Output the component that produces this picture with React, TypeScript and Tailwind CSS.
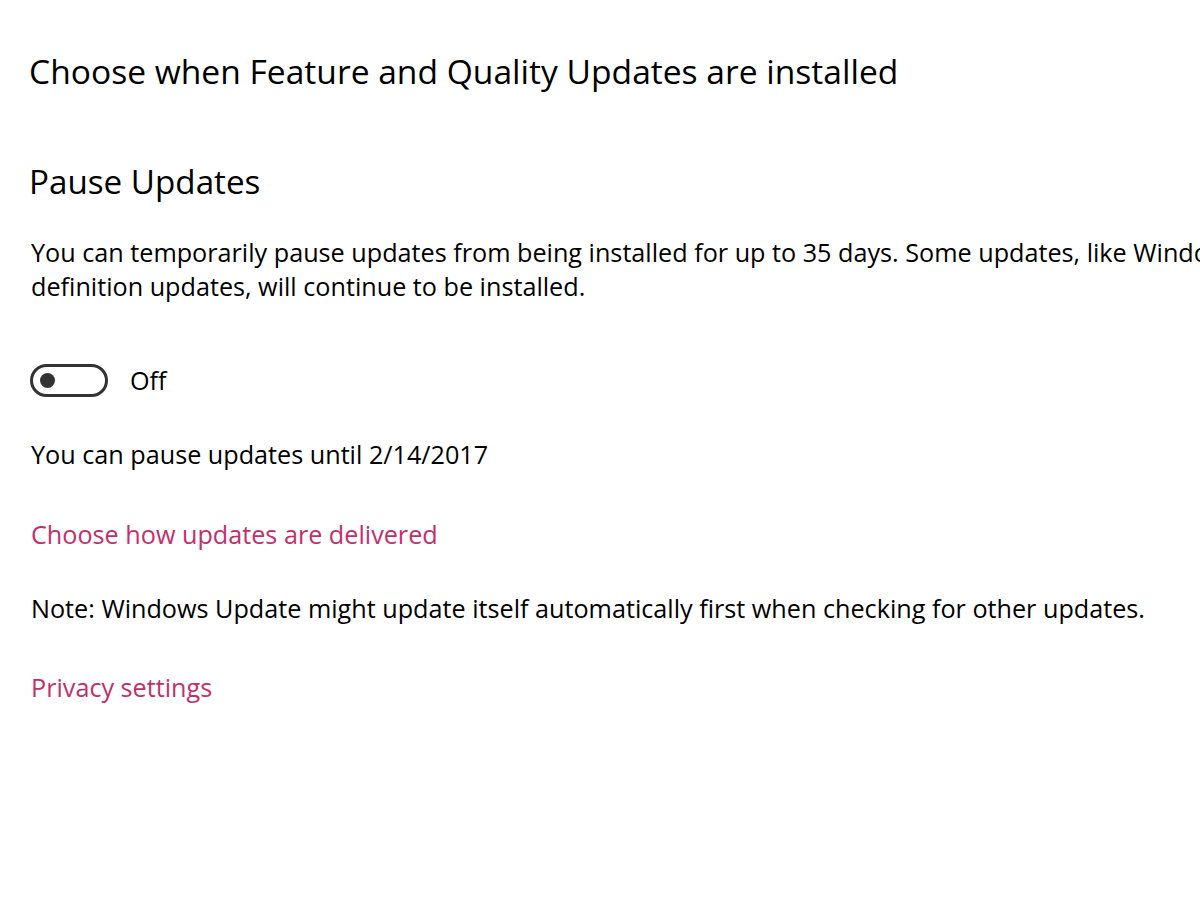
import React from "react";

export default function App() {
  return (
    <div className="w-[1200px] h-[917px] overflow-hidden bg-white text-black font-['Open_Sans','Noto_Sans',sans-serif]">
      <div className="pl-[29px] whitespace-nowrap">
        <h1 className="mt-[49px] text-[33.6px] leading-[44px] font-normal">
          Choose when Feature and Quality Updates are installed
        </h1>
        <h2 className="mt-[67px] text-[33.2px] leading-[44px] font-normal">Pause Updates</h2>
        <p className="mt-[31px] pl-[2px] text-[25.2px] leading-[34px]">
          You can temporarily pause updates from being installed for up to 35 days. Some updates, like Windows Defender
          <br />
          definition updates, will continue to be installed.
        </p>
        <div className="mt-[60px] pl-[1px] flex items-center h-[34px]">
          <div className="w-[78px] h-[33px] rounded-full border-[3px] border-[#333333] flex items-center pl-[7px]">
            <div className="w-[15px] h-[15px] rounded-full bg-[#333333]" />
          </div>
          <span className="ml-[22px] text-[25.2px] leading-[34px]">Off</span>
        </div>
        <p className="mt-[40px] pl-[2px] text-[25.2px] leading-[34px]">You can pause updates until 2/14/2017</p>
        <p className="mt-[46px] pl-[2px] text-[25.2px] leading-[34px] text-[#c2306b]">Choose how updates are delivered</p>
        <p className="mt-[40px] pl-[2px] text-[25.2px] leading-[34px]">
          Note: Windows Update might update itself automatically first when checking for other updates.
        </p>
        <p className="mt-[45px] pl-[2px] text-[25.2px] leading-[34px] text-[#c2306b]">Privacy settings</p>
      </div>
    </div>
  );
}
